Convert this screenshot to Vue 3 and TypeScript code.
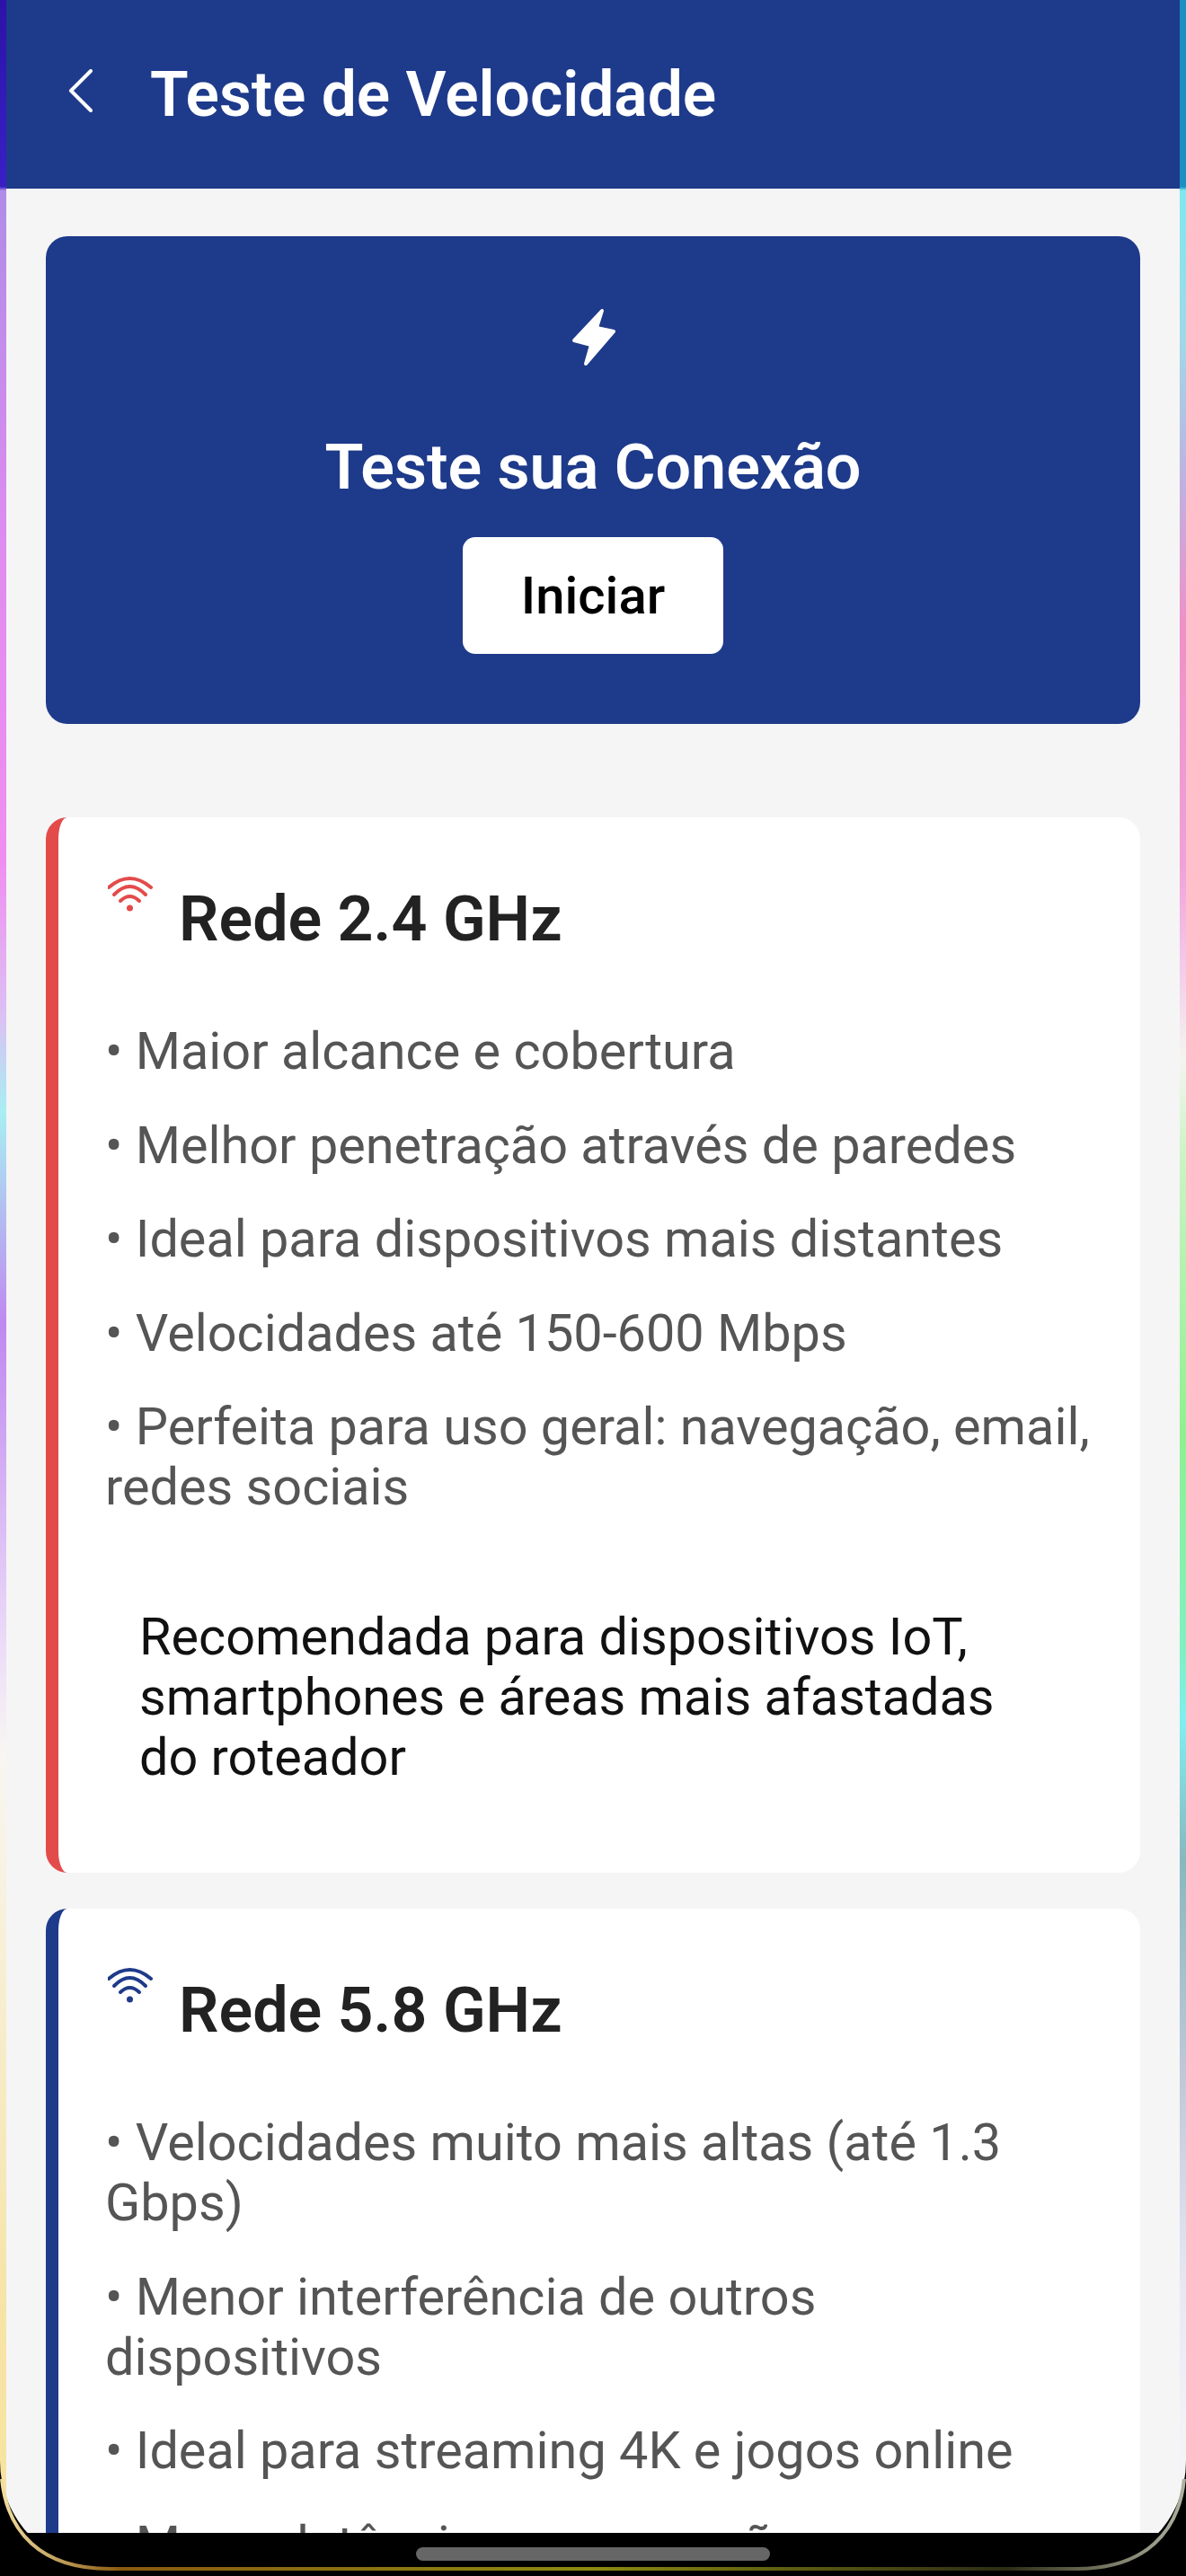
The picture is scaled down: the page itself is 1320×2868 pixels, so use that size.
<script setup lang="ts">
interface Network {
  title: string
  color: string
  points: string[]
  note?: string
}

const networks: Network[] = [
  {
    title: "Rede 2.4 GHz",
    color: "#e34b4b",
    points: [
      "Maior alcance e cobertura",
      "Melhor penetração através de paredes",
      "Ideal para dispositivos mais distantes",
      "Velocidades até 150-600 Mbps",
      "Perfeita para uso geral: navegação, email, redes sociais",
    ],
    note: "Recomendada para dispositivos IoT, smartphones e áreas mais afastadas do roteador",
  },
  {
    title: "Rede 5.8 GHz",
    color: "#1e3a8a",
    points: [
      "Velocidades muito mais altas (até 1.3 Gbps)",
      "Menor interferência de outros dispositivos",
      "Ideal para streaming 4K e jogos online",
      "Menor latência para conexão",
    ],
  },
]
</script>

<template>
  <div class="screen">
    <header class="topbar">
      <svg class="back" viewBox="0 0 28 48" fill="none" stroke="#fff" stroke-width="4" stroke-linecap="round" stroke-linejoin="round">
        <path d="M25 2 L3 24 L25 46" />
      </svg>
      <h1>Teste de Velocidade</h1>
    </header>

    <main class="content">
      <section class="hero">
        <svg class="bolt" viewBox="0 0 52 70" fill="#fff" stroke="#fff" stroke-width="4" stroke-linejoin="round">
          <path d="M35 5 L4 38 L23 43 L17 64 L48 28 L29 24 Z" />
        </svg>
        <h2>Teste sua Conexão</h2>
        <button class="start">Iniciar</button>
      </section>

      <article v-for="net in networks" :key="net.title" class="card" :style="{ borderLeftColor: net.color }">
        <div class="card-head">
          <svg class="wifi" viewBox="0 0 50 40" fill="none" :stroke="net.color" stroke-width="4" stroke-linecap="round">
            <path d="M1 13 Q24.500 -7 48 13" />
            <path d="M7 21 Q24.500 3 42 21" />
            <path d="M14 28 Q24.500 18 35 28" />
            <circle cx="24.500" cy="36" r="3.500" :fill="net.color" stroke="none" />
          </svg>
          <h3>{{ net.title }}</h3>
        </div>
        <p v-for="point in net.points" :key="point" class="point">• {{ point }}</p>
        <p v-if="net.note" class="note">{{ net.note }}</p>
      </article>
    </main>

    <div class="edge edge-left"></div>
    <div class="edge edge-right"></div>
    <div class="frame"></div>
    <div class="navbar"><span class="handle"></span></div>
    <svg class="rim" viewBox="0 0 1320 140" fill="none">
      <defs>
        <linearGradient id="rimGold" x1="0" x2="1" y1="0" y2="0">
          <stop offset="0" stop-color="#f3dfa0" />
          <stop offset="0.1" stop-color="#8a5a12" />
          <stop offset="0.5" stop-color="#8c8a12" />
          <stop offset="0.85" stop-color="#2c2c14" />
          <stop offset="1" stop-color="#b0b0a0" />
        </linearGradient>
      </defs>
      <path d="M2 32 C8 90 44 132 122 132 L1198 132 C1276 132 1312 90 1318 32" stroke="url(#rimGold)" stroke-width="4" />
    </svg>
  </div>
</template>

<style scoped>
.screen {
  position: relative;
  width: 1320px;
  height: 2868px;
  overflow: hidden;
  background: #f5f5f5;
  font-family: Roboto, "Liberation Sans", sans-serif;
}
.topbar {
  display: flex;
  align-items: center;
  height: 210px;
  padding-left: 76px;
  box-sizing: border-box;
  background: #1e3a8a;
}
.back {
  width: 28px;
  height: 48px;
  margin: -8px 63px 0 0;
}
h1 {
  margin: 0;
  font-size: 69.500px;
  font-weight: 600;
  color: #fff;
}
.content {
  display: flex;
  flex-direction: column;
  padding: 53px 51px 0;
}
.hero {
  display: flex;
  flex-direction: column;
  align-items: center;
  height: 543px;
  box-sizing: border-box;
  padding-top: 78px;
  border-radius: 24px;
  background: #1e3a8a;
}
.bolt {
  width: 52px;
  height: 70px;
  margin-left: 2px;
}
h2 {
  margin: 72px 0 0;
  font-size: 70px;
  line-height: 74px;
  font-weight: 600;
  color: #fff;
}
.start {
  width: 290px;
  height: 130px;
  margin-top: 41px;
  border: none;
  border-radius: 14px;
  background: #fff;
  color: #000;
  font-family: inherit;
  font-size: 58px;
  font-weight: 500;
}
.card {
  box-sizing: border-box;
  margin-top: 40px;
  padding: 64px 44px 95px 52px;
  border-left: 14px solid;
  border-radius: 24px;
  background: #fff;
}
.hero + .card {
  margin-top: 104px;
}
.card-head {
  display: flex;
  align-items: flex-start;
  margin-bottom: 79px;
}
.wifi {
  width: 50px;
  height: 40px;
  flex: none;
  margin: 1px 0 0 3px;
}
h3 {
  margin: 14px 0 0 29px;
  font-size: 70px;
  line-height: 70px;
  font-weight: 600;
  color: #222;
}
.point {
  margin: 0 0 37.500px;
  font-size: 57.600px;
  line-height: 67px;
  color: #555;
}
.note {
  margin: 100px 0 0;
  padding: 0 90px 0 38px;
  font-size: 57.600px;
  line-height: 67px;
  color: #111;
}
.edge {
  position: absolute;
  top: 0;
  bottom: 0;
  width: 7px;
}
.edge-left {
  left: 0;
  background: linear-gradient(
    to bottom,
    #2c12a8 0,
    #3a20c4 208px,
    #b08ce8 212px,
    #e28cf0 640px,
    #f08ef0 960px,
    #dcc0f4 1130px,
    #a8eef2 1238px,
    #c088f0 1476px,
    #ecdcf8 1833px,
    #f8f6f2 1952px,
    #f6e4a8 2548px,
    #f8e4a0 2780px
  );
}
.edge-right {
  right: 0;
  background: linear-gradient(
    to bottom,
    #1a90c0 0,
    #1a90c0 208px,
    #80e8ee 212px,
    #a0d8e8 380px,
    #c0b0e0 540px,
    #f090c8 700px,
    #f0a0d8 960px,
    #f4c4e8 1060px,
    #f4f4f0 1178px,
    #c8f4c0 1300px,
    #90f090 1595px,
    #80f0c0 1833px,
    #80eef0 1917px,
    #88b8c0 2070px,
    #c0c8d8 2310px,
    #e8e8f4 2548px,
    #f6f6f8 2780px
  );
}
.frame {
  position: absolute;
  inset: 0 0 8px 0;
  border-radius: 0 0 120px 120px;
  box-shadow: 0 0 0 200px #000;
  pointer-events: none;
}
.navbar {
  position: absolute;
  left: 0;
  right: 0;
  top: 2820px;
  height: 48px;
  display: flex;
  justify-content: center;
  padding-top: 16px;
  box-sizing: border-box;
  background: #000;
  clip-path: inset(0 30px 8px 30px);
}
.handle {
  width: 394px;
  height: 15px;
  border-radius: 8px;
  background: #666;
}
.rim {
  position: absolute;
  left: 0;
  bottom: 0;
  width: 1320px;
  height: 140px;
}
</style>

<style>
html,
body {
  margin: 0;
  background: #000;
}
</style>
